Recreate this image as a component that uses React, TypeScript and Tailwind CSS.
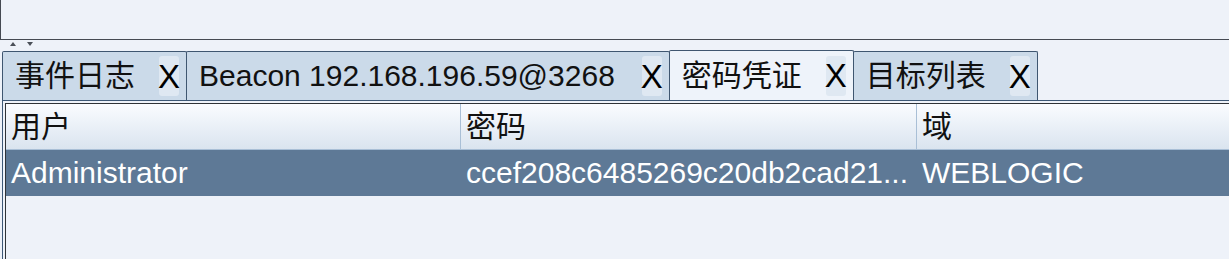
import React from 'react';

const FONT = "font-['Liberation_Sans','Noto_Sans_CJK_SC',sans-serif]";

interface Tab {
  title: string;
  selected?: boolean;
  gap: string;
}

const tabs: Tab[] = [
  { title: '事件日志', gap: 'ml-[24px]' },
  { title: 'Beacon 192.168.196.59@3268', gap: 'ml-[27px]' },
  { title: '密码凭证', selected: true, gap: 'ml-[24px]' },
  { title: '目标列表', gap: 'ml-[24px]' },
];

const columns = [
  { label: '用户', width: 'w-[455px]' },
  { label: '密码', width: 'w-[456px]' },
  { label: '域', width: 'flex-1' },
];

const row = ['Administrator', 'ccef208c6485269c20db2cad21...', 'WEBLOGIC'];

function TabButton({ tab, first }: { tab: Tab; first: boolean }) {
  return (
    <div
      className={`flex items-center border-t border-l border-r border-[#3f5670] rounded-t-[2px] pl-[12px] pr-[7px] ${
        first ? '' : '-ml-px'
      } ${tab.selected ? 'h-[50px] bg-[#eef3fa] relative z-10' : 'h-[49px] bg-[#cbdae9]'}`}
    >
      <span className="text-[30px] leading-none text-[#111] whitespace-nowrap">{tab.title}</span>
      <span
        className={`${tab.gap} w-[20px] h-[40px] flex items-center justify-center rounded-[3px] bg-[#dfe8f2] text-[33px] leading-none text-black`}
      >
        X
      </span>
    </div>
  );
}

export default function App() {
  return (
    <div className={`w-[1229px] h-[259px] overflow-hidden bg-[#eef2f9] ${FONT}`}>
      {/* top panel */}
      <div className="h-[40px] border-l border-b border-[#454a52]" />

      {/* split divider arrows */}
      <div className="h-[10px] flex items-start pt-[2px] pl-[10px] gap-[11px]">
        <svg width="6" height="4" viewBox="0 0 6 4">
          <path d="M3 0 L6 4 L0 4 Z" fill="#4a4f58" />
        </svg>
        <svg width="6" height="4" viewBox="0 0 6 4">
          <path d="M0 0 L6 0 L3 4 Z" fill="#4a4f58" />
        </svg>
      </div>

      {/* tabs */}
      <div className="flex items-end pl-[2px] h-[50px]">
        {tabs.map((t, i) => (
          <TabButton key={t.title} tab={t} first={i === 0} />
        ))}
      </div>

      {/* tab content */}
      <div className="ml-[2px] border-t border-l border-[#3d5876] pt-[2px] pl-[2px] h-[159px]">
        <div className="border-t border-l border-[#2f3338] h-full">
          {/* header */}
          <div className="flex h-[46px] border-b border-[#a9bfd6] bg-gradient-to-b from-[#fafcff] to-[#dae4ef]">
            {columns.map((c, i) => (
              <div
                key={c.label}
                className={`${c.width} flex items-center pl-[5px] text-[30px] leading-none text-[#111] ${
                  i < columns.length - 1 ? 'border-r border-[#a9bfd6]' : ''
                }`}
              >
                {c.label}
              </div>
            ))}
          </div>
          {/* selected row */}
          <div className="flex h-[46px] bg-[#5e7996]">
            {row.map((v, i) => (
              <div
                key={v}
                className={`${columns[i].width} flex items-center pl-[5px] text-[30px] leading-none text-white whitespace-nowrap overflow-hidden ${
                  i < row.length - 1 ? 'border-r border-transparent' : ''
                }`}
              >
                {v}
              </div>
            ))}
          </div>
        </div>
      </div>
    </div>
  );
}
